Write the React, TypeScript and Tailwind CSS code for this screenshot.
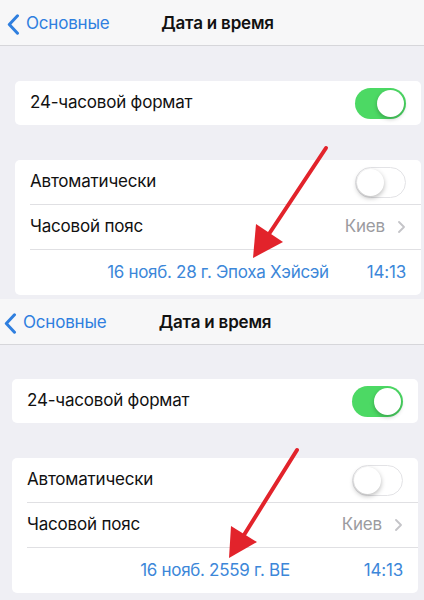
import React from "react";

const font = { fontFamily: "Inter, 'Noto Sans', 'DejaVu Sans', sans-serif" };

function ToggleOn() {
  return (
    <div className="relative w-[51px] h-[31px] rounded-full bg-[#4cd964]">
      <div className="absolute right-[2px] top-[2px] w-[27px] h-[27px] rounded-full bg-white shadow-[0_2px_4px_rgba(0,0,0,0.25)]" />
    </div>
  );
}

function ToggleOff() {
  return (
    <div className="relative w-[51px] h-[31px] rounded-full bg-white border border-[#e3e3e6]">
      <div className="absolute left-[1px] top-[1px] w-[27px] h-[27px] rounded-full bg-white shadow-[0_2px_5px_rgba(0,0,0,0.28)]" />
    </div>
  );
}

function Panel({
  frameW,
  cardML,
  chevML,
  date,
  navTop,
  gap1,
}: {
  frameW: string;
  cardML: string;
  chevML: string;
  date: string;
  navTop: string;
  gap1: string;
}) {
  return (
    <div className="flex flex-col">
      <div className={`${navTop} h-[46px] bg-[#f7f7f8] border-b border-[#d6d6da] overflow-hidden`}>
        <div className={`${frameW} h-[45px] pt-[3px] grid grid-cols-[1fr_auto_1fr] items-center`}>
          <div className={`flex items-center ${chevML}`}>
            <svg width="13" height="21" viewBox="0 0 13 21" className="mr-[6px]">
              <path d="M10.5 1.8 L2.3 10.5 L10.5 19.2" fill="none" stroke="#2f7fdf" strokeWidth="3" strokeLinecap="round" strokeLinejoin="round" />
            </svg>
            <span className="text-[17px] text-[#2f7fdf] tracking-[-0.2px]">Основные</span>
          </div>
          <div className="text-[17px] font-semibold text-[#111] tracking-[-0.2px]">Дата и время</div>
          <div />
        </div>
      </div>
      <div className={`${cardML} ${gap1} w-[406px] h-[44px] bg-white rounded-[5px] flex items-center justify-between pl-[15px] pr-[15px]`}>
        <span className="text-[17px] text-[#111] tracking-[-0.2px]">24-часовой формат</span>
        <ToggleOn />
      </div>
      <div className={`${cardML} mt-[35px] w-[406px] bg-white rounded-[5px] flex flex-col pl-[15px]`}>
        <div className="h-[44px] flex items-center justify-between pr-[15px]">
          <span className="text-[17px] text-[#111] tracking-[-0.2px]">Автоматически</span>
          <ToggleOff />
        </div>
        <div className="h-px bg-[#e0e0e3]" />
        <div className="h-[44px] flex items-center justify-between pr-[16px]">
          <span className="text-[17px] text-[#111] tracking-[-0.2px]">Часовой пояс</span>
          <div className="flex items-center gap-[13px]">
            <span className="text-[17px] text-[#9b9ba0] tracking-[-0.2px]">Киев</span>
            <svg width="7" height="12" viewBox="0 0 7 12">
              <path d="M1 1 L6 6 L1 11" fill="none" stroke="#c4c4c8" strokeWidth="1.8" strokeLinecap="round" strokeLinejoin="round" />
            </svg>
          </div>
        </div>
        <div className="h-px bg-[#e0e0e3]" />
        <div className="h-[45px] -ml-[15px] grid grid-cols-[1fr_auto_1fr] items-center px-[15px]">
          <div />
          <span className="text-[17px] text-[#3c87d9] tracking-[-0.3px]">{date}</span>
          <span className="justify-self-end text-[17px] text-[#3c87d9] tracking-[-0.2px]">14:13</span>
        </div>
      </div>
    </div>
  );
}

export default function App() {
  return (
    <div className="relative w-[424px] h-[600px] overflow-hidden bg-[#efeff4]" style={font}>
      <Panel
        frameW="w-[435px]"
        cardML="ml-[15px]"
        chevML="ml-[7px]"
        date="16 нояб. 28 г. Эпоха Хэйсэй"
        navTop=""
        gap1="mt-[35px]"
      />
      <div className="h-[3px]" />
      <Panel
        frameW="w-[430px]"
        cardML="ml-[12px]"
        chevML="ml-[4px]"
        date="16 нояб. 2559 г. BE"
        navTop="mt-[1px]"
        gap1="mt-[34px]"
      />
      <svg className="absolute inset-0 pointer-events-none" width="424" height="600" viewBox="0 0 424 600">
        <line x1="326" y1="148" x2="269" y2="234" stroke="#e2232b" strokeWidth="4" strokeLinecap="round" />
        <polygon points="253,258 283,242 256,224" fill="#e2232b" />
        <line x1="297" y1="450" x2="244" y2="535" stroke="#e2232b" strokeWidth="4" strokeLinecap="round" />
        <polygon points="229,558 257,542 231,526" fill="#e2232b" />
      </svg>
    </div>
  );
}
